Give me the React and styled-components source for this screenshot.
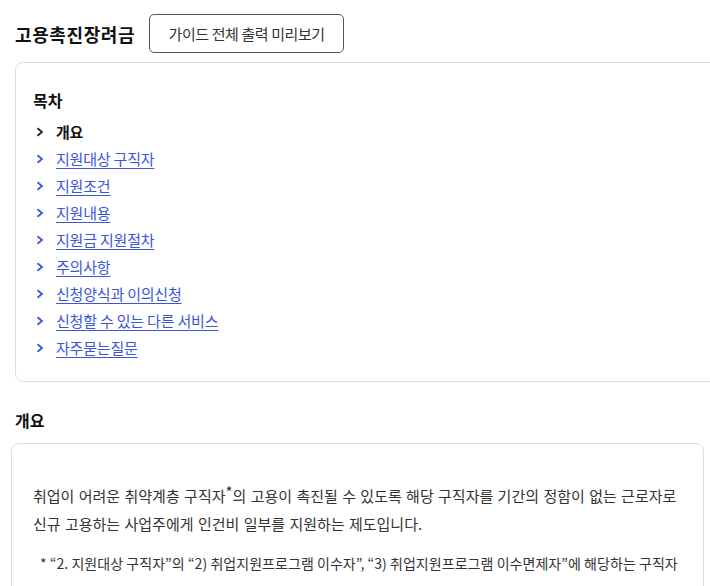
import React from 'react';
import styled, { createGlobalStyle } from 'styled-components';

const GlobalStyle = createGlobalStyle`
  html, body {
    margin: 0;
    padding: 0;
    background: #ffffff;
    overflow: hidden;
  }
  body {
    font-family: "Noto Sans CJK KR", "Noto Sans", sans-serif;
    color: #222222;
  }
`;

const tocItems = [
  { label: '개요', current: true },
  { label: '지원대상 구직자' },
  { label: '지원조건' },
  { label: '지원내용' },
  { label: '지원금 지원절차' },
  { label: '주의사항' },
  { label: '신청양식과 이의신청' },
  { label: '신청할 수 있는 다른 서비스' },
  { label: '자주묻는질문' },
];

function Chevron({ color }) {
  return (
    <svg width="8" height="10" viewBox="0 0 8 10" fill="none">
      <polyline points="1.5,1.2 6,5 1.5,8.8" stroke={color} strokeWidth="1.8" strokeLinejoin="miter" />
    </svg>
  );
}

export default function App() {
  return (
    <>
      <GlobalStyle />
      <Page>
        <Header>
          <Title>고용촉진장려금</Title>
          <PrintButton>가이드 전체 출력 미리보기</PrintButton>
        </Header>

        <TocBox>
          <TocTitle>목차</TocTitle>
          <TocList>
            {tocItems.map((item) => (
              <TocItem key={item.label}>
                <Chevron color={item.current ? '#222222' : '#3b56d9'} />
                <TocLink href="#" $current={item.current}>
                  {item.label}
                </TocLink>
              </TocItem>
            ))}
          </TocList>
        </TocBox>

        <SectionTitle>개요</SectionTitle>
        <ContentBox>
          <Paragraph>
            취업이 어려운 취약계층 구직자<Star>*</Star>의 고용이 촉진될 수 있도록 해당 구직자를 기간의 정함이 없는 근로자로
            신규 고용하는 사업주에게 인건비 일부를 지원하는 제도입니다.
          </Paragraph>
          <Note>
            * “2. 지원대상 구직자”의 “2) 취업지원프로그램 이수자”, “3) 취업지원프로그램 이수면제자”에 해당하는 구직자
          </Note>
        </ContentBox>
      </Page>
    </>
  );
}

const Page = styled.div`
  padding: 14px 0 0 15px;
`;

const Header = styled.div`
  display: flex;
  align-items: center;
  gap: 14px;
  height: 39px;
`;

const Title = styled.h1`
  margin: 0;
  font-size: 18px;
  font-weight: 700;
  letter-spacing: 0.6px;
  color: #111111;
`;

const PrintButton = styled.button`
  height: 39px;
  width: 195px;
  padding: 0;
  border: 1px solid #555555;
  border-radius: 5px;
  background: #ffffff;
  font-family: inherit;
  font-size: 15px;
  letter-spacing: -0.4px;
  color: #333333;
  cursor: pointer;
`;

const TocBox = styled.nav`
  margin-top: 9px;
  margin-right: -20px;
  border: 1px solid #dddddd;
  border-radius: 8px;
  padding: 25px 0 20px 17px;
`;

const TocTitle = styled.h2`
  margin: 0 0 6px;
  font-size: 16px;
  line-height: 24px;
  font-weight: 700;
  color: #111111;
`;

const TocList = styled.ul`
  list-style: none;
  margin: 0;
  padding: 0;
`;

const TocItem = styled.li`
  display: flex;
  align-items: center;
  gap: 12px;
  height: 27px;
  padding-left: 3px;
`;

const TocLink = styled.a`
  font-size: 15px;
  letter-spacing: -0.2px;
  color: ${(p) => (p.$current ? '#111111' : '#3b56d9')};
  font-weight: ${(p) => (p.$current ? 700 : 400)};
  text-decoration: ${(p) => (p.$current ? 'none' : 'underline')};
  text-underline-offset: 3px;
`;

const SectionTitle = styled.h2`
  margin: 26px 0 0;
  font-size: 16px;
  line-height: 24px;
  font-weight: 700;
  color: #111111;
`;

const ContentBox = styled.section`
  margin: 11px 6px 0 -4px;
  height: 200px;
  border: 1px solid #dddddd;
  border-radius: 8px;
  padding: 38px 20px 0 21px;
`;

const Paragraph = styled.p`
  margin: 0;
  font-size: 15px;
  line-height: 28px;
  word-spacing: 1px;
  color: #333333;
`;

const Star = styled.span`
  display: inline-block;
  font-size: 15px;
  line-height: 15px;
  transform: translateY(-4px);
`;

const Note = styled.p`
  margin: 11px 0 0 7px;
  font-size: 14px;
  line-height: 28px;
  letter-spacing: 0.05px;
  color: #333333;
  white-space: nowrap;
`;
